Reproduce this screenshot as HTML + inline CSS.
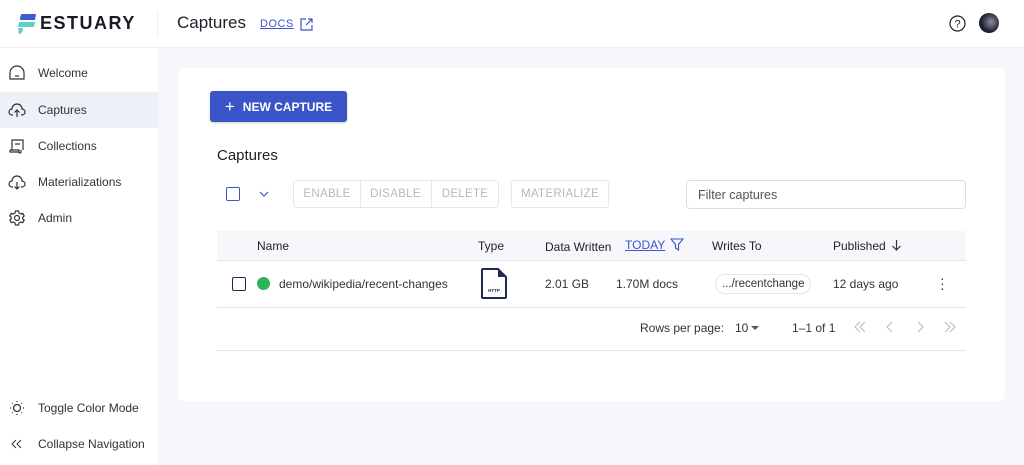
<!DOCTYPE html>
<html><head><meta charset="utf-8"><style>
*{box-sizing:border-box;margin:0;padding:0}
body{width:1024px;height:465px;overflow:hidden;background:#f6f7fb;font-family:"Liberation Sans",sans-serif;color:#1f1f2a;position:relative;font-size:12px}
.hdr{position:absolute;left:0;top:0;width:1024px;height:48px;background:#fff;border-bottom:1px solid #eceef3}
.side{position:absolute;left:0;top:48px;width:158px;height:417px;background:#fff}
.nav{position:absolute;left:0;width:158px;height:36px;display:flex;align-items:center;font-size:12px;color:#333}
.nav svg{position:absolute;left:8px}
.nav span{position:absolute;left:38px}
.card{position:absolute;left:178px;top:68px;width:827px;height:333px;background:#fff;border-radius:6px}
.abs{position:absolute}
.btn{border:1px solid #e6e7ea;color:#b8b8bc;font-size:11.5px;display:flex;align-items:center;justify-content:center;letter-spacing:.3px}
.cb{position:absolute;width:14px;height:14px;border:1.6px solid #3b54c8;border-radius:2px}
.th{font-size:12px;color:#222}
.td{font-size:12px;color:#333}
</style></head><body>
<div class="hdr">
<svg class="abs" style="left:18px;top:14px" width="18" height="20" viewBox="0 0 18 20"><path d="M4 0h14l-1 6H2C2 3 3 0 4 0z" fill="#3a5bd6"/><path d="M1 8h16l-1 5H0z" fill="#5fd0c9"/><path d="M0 14h5c0 3-1 6-4 6z" fill="#5fd0c9"/></svg>
<div class="abs" style="left:40px;top:13px;font-size:18px;font-weight:bold;letter-spacing:1.5px;color:#1a1a26">ESTUARY</div>
<div class="abs" style="left:157px;top:11px;width:1px;height:25px;background:#eee"></div>
<div class="abs" style="left:177px;top:13px;font-size:17px;color:#1f1f2a">Captures</div>
<div class="abs" style="left:260px;top:18px;font-size:11px;color:#3b54c8;text-decoration:underline;letter-spacing:.5px">DOCS</div>
<svg class="abs" style="left:300px;top:18px" width="13" height="13" viewBox="0 0 13 13" fill="none" stroke="#3b54c8" stroke-width="1.2"><path d="M6 1H1v11h11V7M8 1h4v4M12 1L6 7"/></svg>
<svg class="abs" style="left:949px;top:15px" width="17" height="17" viewBox="0 0 17 17"><circle cx="8.5" cy="8.5" r="7.5" fill="none" stroke="#222" stroke-width="1.2"/><text x="8.5" y="12.5" font-size="11" text-anchor="middle" font-family="Liberation Sans" fill="#222">?</text></svg>
<div class="abs" style="left:979px;top:13px;width:20px;height:20px;border-radius:50%;background:radial-gradient(circle at 60% 45%,#8a8fa8,#1d1f2b 60%)"></div>
</div>
<div class="side">
<div class="nav" style="top:7px"><svg width="18" height="18" viewBox="0 0 18 18" fill="none" stroke="#333" stroke-width="1.2"><path d="M2 15V9a7 7 0 0 1 14 0v6z M7 12h4"/></svg><span>Welcome</span></div>
<div class="nav" style="top:44px;background:#eef0f8"><svg width="18" height="18" viewBox="0 0 18 18" fill="none" stroke="#333" stroke-width="1.2"><path d="M5 14H4a3 3 0 0 1 0-6 5 5 0 0 1 10 0 3 3 0 0 1 0 6h-1M9 16V9M6.5 11.5 9 9l2.5 2.5"/></svg><span>Captures</span></div>
<div class="nav" style="top:80px"><svg width="18" height="18" viewBox="0 0 18 18" fill="none" stroke="#333" stroke-width="1.2"><path d="M4 13V3h11v10M2 13h9v2a1 1 0 0 0 2 0v-2M2 13v2h9M7 7h5"/></svg><span>Collections</span></div>
<div class="nav" style="top:116px"><svg width="18" height="18" viewBox="0 0 18 18" fill="none" stroke="#333" stroke-width="1.2"><path d="M5 14H4a3 3 0 0 1 0-6 5 5 0 0 1 10 0 3 3 0 0 1 0 6h-1M9 9v7M6.5 13.5 9 16l2.5-2.5"/></svg><span>Materializations</span></div>
<div class="nav" style="top:152px"><svg width="18" height="18" viewBox="0 0 18 18" fill="none" stroke="#333" stroke-width="1.2"><circle cx="9" cy="9" r="2.5"/><path d="M7.5 2h3l.5 2 1.7 1 2-.7 1.5 2.6-1.5 1.4v1.4l1.5 1.4-1.5 2.6-2-.7-1.7 1-.5 2h-3l-.5-2-1.7-1-2 .7-1.5-2.6 1.5-1.4V8.3L1.8 6.9 3.3 4.3l2 .7L7 4z"/></svg><span>Admin</span></div>
<div class="nav" style="top:342px"><svg width="18" height="18" viewBox="0 0 18 18" fill="none" stroke="#333" stroke-width="1.2"><circle cx="9" cy="9" r="3.5"/><path d="M9 2v1M9 15v1M2 9h1M15 9h1M4 4l.6.6M13.4 13.4l.6.6M4 14l.6-.6M13.4 4.6l.6-.6"/></svg><span>Toggle Color Mode</span></div>
<div class="nav" style="top:378px"><svg width="18" height="18" viewBox="0 0 18 18" fill="none" stroke="#333" stroke-width="1"><path d="M8 5 4 9l4 4M13 5 9 9l4 4"/></svg><span>Collapse Navigation</span></div>
</div>
<div class="card"></div>
<div class="abs" style="left:210px;top:91px;width:137px;height:31px;background:#3b54c8;border-radius:3px;color:#fff;font-size:12px;font-weight:bold;display:flex;align-items:center;justify-content:center;box-shadow:0 1px 2px rgba(0,0,0,.2)"><span style="font-size:17px;font-weight:normal;margin-right:8px">+</span>NEW CAPTURE</div>
<div class="abs" style="left:217px;top:147px;font-size:15px;color:#222">Captures</div>
<div class="cb" style="left:226px;top:187px"></div>
<svg class="abs" style="left:258px;top:190px" width="12" height="8" viewBox="0 0 12 8" fill="none" stroke="#3b54c8" stroke-width="1.2"><path d="M2 2l4 4 4-4"/></svg>
<div class="abs btn" style="left:293px;top:180px;width:68px;height:28px;border-radius:3px 0 0 3px">ENABLE</div>
<div class="abs btn" style="left:360px;top:180px;width:72px;height:28px;border-left:none">DISABLE</div>
<div class="abs btn" style="left:431px;top:180px;width:68px;height:28px;border-radius:0 3px 3px 0">DELETE</div>
<div class="abs btn" style="left:511px;top:180px;width:98px;height:28px;border-radius:3px">MATERIALIZE</div>
<div class="abs" style="left:686px;top:180px;width:280px;height:29px;border:1px solid #dcdde2;border-radius:4px;font-size:12.5px;color:#555;padding:7px 11px">Filter captures</div>
<div class="abs" style="left:217px;top:231px;width:749px;height:30px;background:#f6f7fb;border-bottom:1px solid #e4e5ea"></div>
<div class="abs th" style="left:257px;top:239px">Name</div>
<div class="abs th" style="left:478px;top:239px">Type</div>
<div class="abs th" style="left:545px;top:240px">Data Written</div>
<div class="abs th" style="left:625px;top:238px;color:#3b54c8;text-decoration:underline">TODAY</div>
<svg class="abs" style="left:670px;top:238px" width="14" height="13" viewBox="0 0 14 13" fill="none" stroke="#3b54c8" stroke-width="1.1"><path d="M1 1h12L8.5 6.5V12L5.5 10V6.5z"/></svg>
<div class="abs th" style="left:712px;top:239px">Writes To</div>
<div class="abs th" style="left:833px;top:239px">Published</div>
<svg class="abs" style="left:891px;top:239px" width="11" height="12" viewBox="0 0 11 12" fill="none" stroke="#333" stroke-width="1.2"><path d="M5.5 1v10M1.5 7l4 4 4-4"/></svg>
<div class="abs" style="left:217px;top:307px;width:749px;height:1px;background:#e4e5ea"></div>
<div class="cb" style="left:232px;top:277px;border-color:#1f2a55"></div>
<div class="abs" style="left:257px;top:277px;width:13px;height:13px;border-radius:50%;background:#2fb35a"></div>
<div class="abs td" style="left:279px;top:277px">demo/wikipedia/recent-changes</div>
<svg class="abs" style="left:481px;top:268px" width="26" height="31" viewBox="0 0 26 31"><path d="M2 1h15l8 8v20a1 1 0 0 1-1 1H2a1 1 0 0 1-1-1V2a1 1 0 0 1 1-1z" fill="#fff" stroke="#1f2a55" stroke-width="2"/><path d="M17 1v8h8z" fill="#1f2a55"/><text x="13" y="24" font-size="4.5" font-weight="bold" text-anchor="middle" fill="#1f2a55" font-family="Liberation Sans">HTTP</text></svg>
<div class="abs td" style="left:545px;top:277px">2.01 GB</div>
<div class="abs td" style="left:616px;top:277px">1.70M docs</div>
<div class="abs td" style="left:715px;top:274px;height:20px;border:1px solid #e4e5ea;border-radius:10px;padding:3px 6px;font-size:11.5px">.../recentchange</div>
<div class="abs td" style="left:833px;top:277px">12 days ago</div>
<div class="abs" style="left:940px;top:276px;font-size:14px;color:#333;line-height:5px">·<br>·<br>·</div>
<div class="abs td" style="left:640px;top:321px">Rows per page:</div>
<div class="abs td" style="left:735px;top:321px">10</div>
<svg class="abs" style="left:751px;top:325px" width="9" height="6"><path d="M0 1h8L4 5z" fill="#555"/></svg>
<div class="abs td" style="left:792px;top:321px">1–1 of 1</div>
<svg class="abs" style="left:850px;top:320px" width="110" height="14" viewBox="0 0 110 14" fill="none" stroke="#bbb" stroke-width="1.1"><path d="M10 2 5 7l5 5M15 2l-5 5 5 5M42 2l-5 5 5 5M68 2l5 5-5 5M95 2l5 5-5 5M100 2l5 5-5 5"/></svg>
<div class="abs" style="left:217px;top:350px;width:749px;height:1px;background:#e4e5ea"></div>
</body></html>
